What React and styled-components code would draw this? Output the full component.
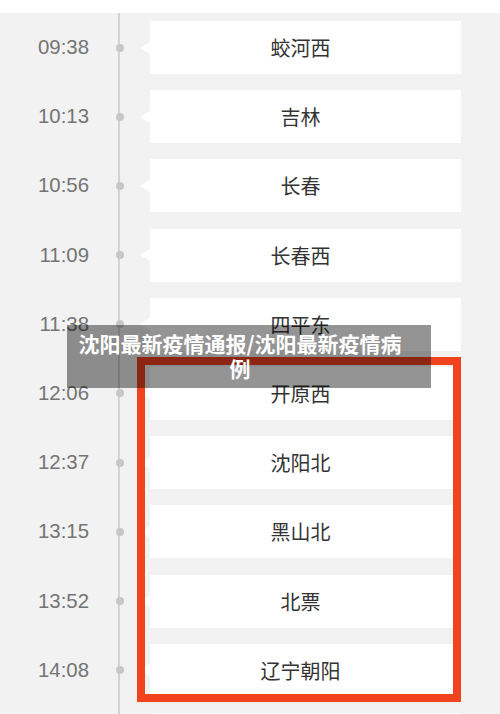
import React from "react";
import styled, { createGlobalStyle } from "styled-components";

const GlobalStyle = createGlobalStyle`
  html, body {
    margin: 0;
    padding: 0;
    background: #ffffff;
  }
  body {
    font-family: "Noto Sans CJK SC", "Liberation Sans", sans-serif;
  }
`;

// last row only peeks in at the bottom edge
const stops = [
  { time: "09:38", name: "蛟河西" },
  { time: "10:13", name: "吉林" },
  { time: "10:56", name: "长春" },
  { time: "11:09", name: "长春西" },
  { time: "11:38", name: "四平东" },
  { time: "12:06", name: "开原西" },
  { time: "12:37", name: "沈阳北" },
  { time: "13:15", name: "黑山北" },
  { time: "13:52", name: "北票" },
  { time: "14:08", name: "辽宁朝阳" },
  { time: "", name: "" },
];

const App = () => {
  return (
    <Screen>
      <GlobalStyle />
      <Timeline>
        {stops.map((stop, i) => (
          <Row key={i}>
            <Time>{stop.time}</Time>
            <DotCell>
              <Dot />
            </DotCell>
            <StationCard>{stop.name}</StationCard>
          </Row>
        ))}
      </Timeline>

      <RedFrame />
      <Banner>沈阳最新疫情通报/沈阳最新疫情病例</Banner>
    </Screen>
  );
};

const Screen = styled.div`
  position: relative;
  width: 500px;
  height: 714px;
  overflow: hidden;
  padding-top: 13px;
  box-sizing: border-box;
  background: #ffffff;
`;

const Timeline = styled.div`
  display: flex;
  flex-direction: column;
  gap: 16.2px;
  padding-top: 8px;
  min-height: 701px;
  box-sizing: border-box;
  background:
    linear-gradient(#d3d3d3, #d3d3d3) no-repeat 118px 0 / 2px 100%,
    #f2f2f2;
`;

const Row = styled.div`
  display: grid;
  grid-template-columns: 89px 61px 311px;
  align-items: center;
  height: 53px;
  flex-shrink: 0;
`;

const Time = styled.span`
  text-align: right;
  font-family: "Liberation Sans", Arial, sans-serif;
  font-size: 20.4px;
  color: #747474;
`;

const DotCell = styled.div`
  display: flex;
  justify-content: center;
`;

const Dot = styled.span`
  width: 8px;
  height: 8px;
  border-radius: 50%;
  background: #c7c7c7;
`;

const StationCard = styled.div`
  position: relative;
  height: 53px;
  background: #ffffff;
  display: flex;
  align-items: center;
  justify-content: center;
  padding-right: 10px;
  font-size: 20px;
  color: #333333;

  &::before {
    content: "";
    position: absolute;
    left: -10px;
    top: 50%;
    transform: translateY(-50%);
    border-right: 10px solid #ffffff;
    border-top: 6px solid transparent;
    border-bottom: 6px solid transparent;
  }
`;

const RedFrame = styled.div`
  position: absolute;
  left: 137px;
  top: 357px;
  width: 324px;
  height: 345px;
  box-sizing: border-box;
  border: 8px solid #f2431f;
  pointer-events: none;
`;

const Banner = styled.div`
  position: absolute;
  left: 67px;
  top: 325px;
  width: 364px;
  height: 63px;
  box-sizing: border-box;
  padding: 6px 28px 6px 10px;
  background: rgba(0, 0, 0, 0.42);
  color: #ffffff;
  font-family: "Noto Sans CJK SC", sans-serif;
  font-weight: 700;
  font-size: 21px;
  line-height: 25px;
  text-align: center;
`;

export default App;
